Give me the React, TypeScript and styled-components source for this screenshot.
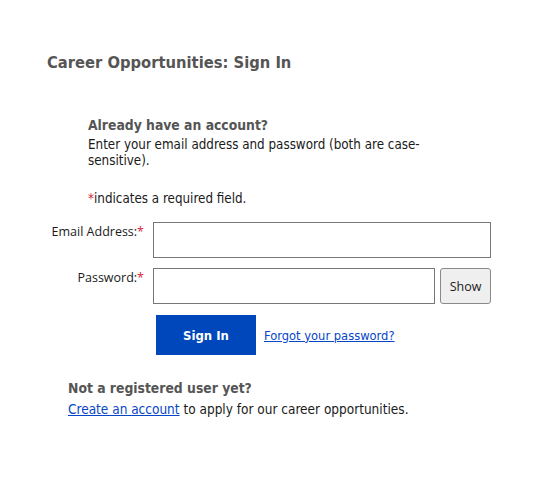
import React from "react";
import styled, { createGlobalStyle } from "styled-components";

const Global = createGlobalStyle`
  html, body { margin: 0; padding: 0; background: #fff; }
  body { font-family: "DejaVu Sans Condensed", Tahoma, sans-serif; color: #1a1a1a; }
`;

const Page = styled.div`
  width: 547px;
  height: 483px;
  box-sizing: border-box;
  padding: 52px 0 0 47px;
`;

const Title = styled.h1`
  margin: 0;
  font-size: 16.4px;
  font-weight: bold;
  color: #555;
  line-height: 22px;
`;

const Intro = styled.div`
  margin: 41px 0 0 41px;
  width: 340px;
`;

const SubHead = styled.h2`
  margin: 0;
  font-size: 13.8px;
  font-weight: bold;
  color: #555;
  line-height: 20px;
`;

const Text = styled.p<{ $gap?: number }>`
  margin: ${(p) => p.$gap ?? 0}px 0 0 0;
  font-size: 13.3px;
  line-height: 16px;
  color: #1a1a1a;
`;

const Req = styled.span`
  color: #d9263b;
`;

const Form = styled.div`
  margin-top: 15px;
  display: flex;
  flex-direction: column;
  gap: 10px;
`;

const Row = styled.div`
  display: flex;
  align-items: flex-start;
`;

const Label = styled.label`
  width: 97px;
  padding-top: 1px;
  padding-right: 9px;
  text-align: right;
  font-family: "Open Sans", sans-serif;
  font-size: 12.5px;
  color: #1a1a1a;
`;

const Input = styled.input<{ $w: number }>`
  box-sizing: border-box;
  width: ${(p) => p.$w}px;
  height: 36px;
  border: 1px solid #767676;
  border-radius: 0;
  padding: 0 6px;
  margin: 0;
  background: #fff;
`;

const ShowBtn = styled.button`
  box-sizing: border-box;
  margin-left: 5px;
  width: 51px;
  height: 36px;
  border: 1px solid #8a8a8a;
  border-radius: 3px;
  background: #efefef;
  font-family: "Open Sans", sans-serif;
  font-size: 12.5px;
  color: #1a1a1a;
  padding: 0;
`;

const Actions = styled.div`
  display: flex;
  align-items: center;
  margin: 1px 0 0 109px;
  gap: 8px;
`;

const Primary = styled.button`
  width: 100px;
  height: 40px;
  border: none;
  background: #0047bb;
  color: #fff;
  font-family: "DejaVu Sans Condensed", sans-serif;
  font-weight: bold;
  font-size: 13px;
  padding: 0;
`;

const Link = styled.a<{ $size?: number }>`
  color: #0645c8;
  text-decoration: underline;
  font-size: ${(p) => p.$size ?? 13.5}px;
  cursor: pointer;
`;

const Register = styled.div`
  margin: 23px 0 0 21px;
`;

const RegText = styled(Text)`
  margin-top: 2px;
  line-height: 18px;
  font-size: 13.5px;
`;

export default function App() {
  return (
    <>
      <Global />
      <Page>
        <Title>Career Opportunities: Sign In</Title>
        <Intro>
          <SubHead>Already have an account?</SubHead>
          <Text $gap={2}>
            Enter your email address and password (both are case-sensitive).
          </Text>
          <Text $gap={22}>
            <Req>*</Req>indicates a required field.
          </Text>
        </Intro>
        <Form>
          <Row>
            <Label>
              Email Address:<Req>*</Req>
            </Label>
            <Input $w={338} type="text" aria-label="Email Address" />
          </Row>
          <Row>
            <Label>
              Password:<Req>*</Req>
            </Label>
            <Input $w={282} type="password" aria-label="Password" />
            <ShowBtn>Show</ShowBtn>
          </Row>
          <Actions>
            <Primary>Sign In</Primary>
            <Link $size={12.8}>Forgot your password?</Link>
          </Actions>
        </Form>
        <Register>
          <SubHead>Not a registered user yet?</SubHead>
          <RegText>
            <Link>Create an account</Link> to apply for our career opportunities.
          </RegText>
        </Register>
      </Page>
    </>
  );
}
